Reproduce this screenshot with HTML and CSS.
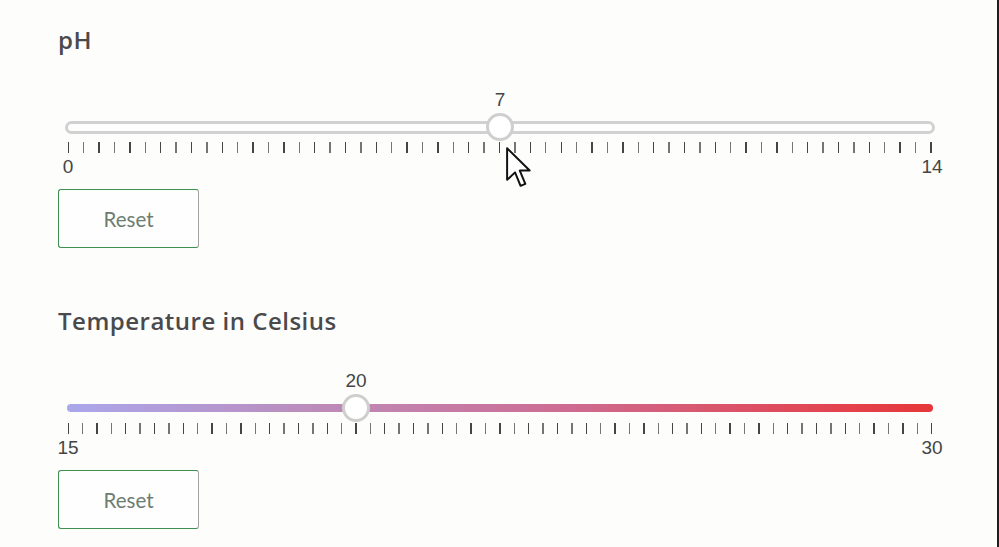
FILE: index.html
```html
<!DOCTYPE html>
<html lang="en">
<head>
<meta charset="utf-8">
<title>Sliders</title>
<link rel="stylesheet" href="styles.css">
</head>
<body>
<div class="page">
  <section class="field">
    <h2 class="field-title">pH</h2>
    <div class="slider">
      <div class="value-row"><span class="value" style="left:50%">7</span></div>
      <div class="track-area">
        <div class="track track-ph"></div>
        <span class="thumb" style="left:50%"></span>
      </div>
      <div class="ticks" id="ticks-ph"></div>
      <div class="limits"><span class="limit"><span>0</span></span><span class="limit"><span>14</span></span></div>
    </div>
    <button class="reset" type="button">Reset</button>
    <svg class="cursor" width="26" height="40" viewBox="-0.6 -0.6 12.2 20.2" aria-hidden="true">
      <path d="M0 0 L0 16 L4 12.2 L6.8 19 L9.2 18 L6.4 11.3 L11.4 11.3 Z" fill="#fff" stroke="#111" stroke-width="1" stroke-linejoin="round"/>
    </svg>
  </section>
  <section class="field field-second">
    <h2 class="field-title">Temperature in Celsius</h2>
    <div class="slider">
      <div class="value-row"><span class="value" style="left:33.333%">20</span></div>
      <div class="track-area">
        <div class="track track-temp"></div>
        <span class="thumb" style="left:33.333%"></span>
      </div>
      <div class="ticks" id="ticks-temp"></div>
      <div class="limits"><span class="limit"><span>15</span></span><span class="limit"><span>30</span></span></div>
    </div>
    <button class="reset" type="button">Reset</button>
  </section>
</div>
<script>
  function fill(id, n) {
    var el = document.getElementById(id);
    for (var i = 0; i < n; i++) {
      var t = document.createElement('span');
      t.className = 'tick';
      el.appendChild(t);
    }
  }
  fill('ticks-ph', 57);
  fill('ticks-temp', 61);
</script>
</body>
</html>
```

FILE: styles.css
```css
html, body {
  margin: 0;
  padding: 0;
  background: #fdfdfc;
}

.page {
  position: relative;
  box-sizing: border-box;
  width: 999px;
  height: 547px;
  border-right: 2px solid #1f1f1f;
  padding-left: 58px;
  background: #fdfdfc;
  overflow: hidden;
}

.field {
  position: relative;
  display: flex;
  flex-direction: column;
  align-items: flex-start;
  padding-top: 25px;
}

.field-second {
  margin-top: 33px;
}

.field-title {
  margin: 0;
  font-family: "Open Sans", Lato, sans-serif;
  font-weight: 600;
  font-size: 24px;
  line-height: 30px;
  letter-spacing: 0.5px;
  color: #4a4a4c;
}

.slider {
  width: 864px;
  margin-left: 10px;
  margin-top: 34px;
  display: flex;
  flex-direction: column;
}

.value-row {
  position: relative;
  height: 22px;
}

.value {
  position: absolute;
  top: 0;
  transform: translateX(-50%);
  font-family: "Liberation Sans", Arial, sans-serif;
  font-size: 19px;
  line-height: 22px;
  color: #454545;
}

.track-area {
  position: relative;
  height: 28px;
  margin-top: 2px;
  display: flex;
  align-items: center;
}

.track {
  flex: 1;
  box-sizing: border-box;
}

.track-ph {
  height: 13px;
  margin: 0 -3px;
  border: 3px solid #d1d1d1;
  border-radius: 7px;
  background: #fefefe;
}

.track-temp {
  height: 8px;
  margin: 0 -1px;
  border-radius: 4px;
  background: linear-gradient(to right, #aaa7ec 0%, #bd8ab8 30%, #cc6f96 55%, #e3424d 90%, #e6373a 100%);
}

.thumb {
  position: absolute;
  top: 0;
  width: 28px;
  height: 28px;
  box-sizing: border-box;
  margin-left: -14px;
  border-radius: 50%;
  border: 3px solid #cfcfcf;
  background: #ffffff;
}

.ticks {
  display: flex;
  justify-content: space-between;
  height: 11px;
  margin: 1px -0.5px 0;
}

.tick {
  width: 1.4px;
  height: 11px;
  background: #454545;
}

.tick:nth-child(2n) {
  background: #757575;
}

.limits {
  display: flex;
  justify-content: space-between;
  margin-top: 3px;
  height: 22px;
}

.limit {
  width: 0;
  display: flex;
  justify-content: center;
  font-family: "Liberation Sans", Arial, sans-serif;
  font-size: 19px;
  line-height: 22px;
  color: #454545;
  white-space: nowrap;
}

.reset {
  margin-top: 11px;
  width: 141px;
  height: 59px;
  box-sizing: border-box;
  border: 1px solid #3f8f50;
  border-right-color: #a3a3a3;
  border-radius: 3px;
  background: #fefefe;
  font-family: Lato, "Open Sans", sans-serif;
  font-size: 20.5px;
  font-weight: 400;
  color: #6d7d70;
  padding: 0;
}

.cursor {
  position: absolute;
  left: 447px;
  top: 147px;
}
```
